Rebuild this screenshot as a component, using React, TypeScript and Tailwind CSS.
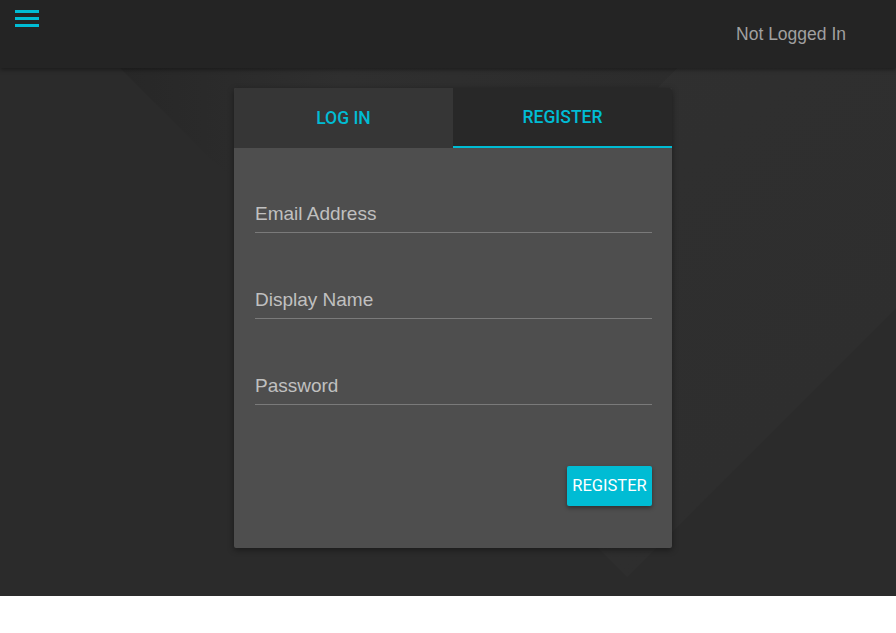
import React from "react";

function Field({ label }: { label: string }) {
  return (
    <div className="border-b border-[#7a7a7a] pb-[7px]">
      <div className="h-[22px] leading-[22px] text-[19px] text-[#c0c0c0] [font-family:'Liberation_Sans',Arial,sans-serif]">{label}</div>
    </div>
  );
}

export default function App() {
  return (
    <div className="w-[896px] h-[633px] bg-white">
      <header className="relative z-10 h-[68px] bg-[#242424] shadow-[0_2px_4px_rgba(0,0,0,0.35)] flex items-start justify-between">
        <button className="mt-[10px] ml-[15px] flex flex-col gap-[4px]">
          <span className="block w-[24px] h-[3px] bg-[#00bcd4]" />
          <span className="block w-[24px] h-[3px] bg-[#00bcd4]" />
          <span className="block w-[24px] h-[3px] bg-[#00bcd4]" />
        </button>
        <div className="mt-[21px] mr-[50px] text-[17.5px] text-[#a0a0a0] [font-family:'Liberation_Sans',Arial,sans-serif]">
          Not Logged In
        </div>
      </header>
      <main className="relative h-[528px] bg-[#2b2b2b] overflow-hidden">
        <svg className="absolute inset-0" width="896" height="528" viewBox="0 0 896 528">
          <defs>
            <linearGradient id="g1" x1="0" y1="0" x2="1" y2="0">
              <stop offset="0" stopColor="#272727" />
              <stop offset="0.4" stopColor="#2f2f2f" />
              <stop offset="1" stopColor="#2c2c2c" />
            </linearGradient>
            <linearGradient id="g2" x1="0" y1="0" x2="1" y2="1">
              <stop offset="0" stopColor="#303030" />
              <stop offset="1" stopColor="#2d2d2d" />
            </linearGradient>
          </defs>
          <polygon points="677,0 1000,0 1000,136 627,509 398,278" fill="url(#g2)" />
          <polygon points="120,0 677,0 398,278" fill="url(#g1)" />
        </svg>
        <div className="relative pt-[20px] pl-[10px] flex justify-center">
          <div className="w-[438px] bg-[#4e4e4e] rounded-[2px] shadow-[0_2px_6px_rgba(0,0,0,0.4)] overflow-hidden">
            <div className="flex h-[60px] font-medium text-[17.5px] text-[#00bcd4] [font-family:Roboto,sans-serif]">
              <div className="flex-1 bg-[#363636] flex items-center justify-center">LOG IN</div>
              <div className="flex-1 bg-[#282828] flex items-center justify-center border-b-2 border-[#00bcd4] pt-[1px]">REGISTER</div>
            </div>
            <div className="pl-[21px] pr-[20px] pt-[55px] pb-[42px]">
              <div className="flex flex-col gap-[56px]">
                <Field label="Email Address" />
                <Field label="Display Name" />
                <Field label="Password" />
              </div>
              <div className="flex justify-end mt-[61px]">
                <button className="h-[40px] w-[85px] bg-[#00bcd4] text-white text-[16.5px] rounded-[2px] shadow-[0_2px_4px_rgba(0,0,0,0.4)] [font-family:Roboto,sans-serif]">
                  REGISTER
                </button>
              </div>
            </div>
          </div>
        </div>
      </main>
    </div>
  );
}
